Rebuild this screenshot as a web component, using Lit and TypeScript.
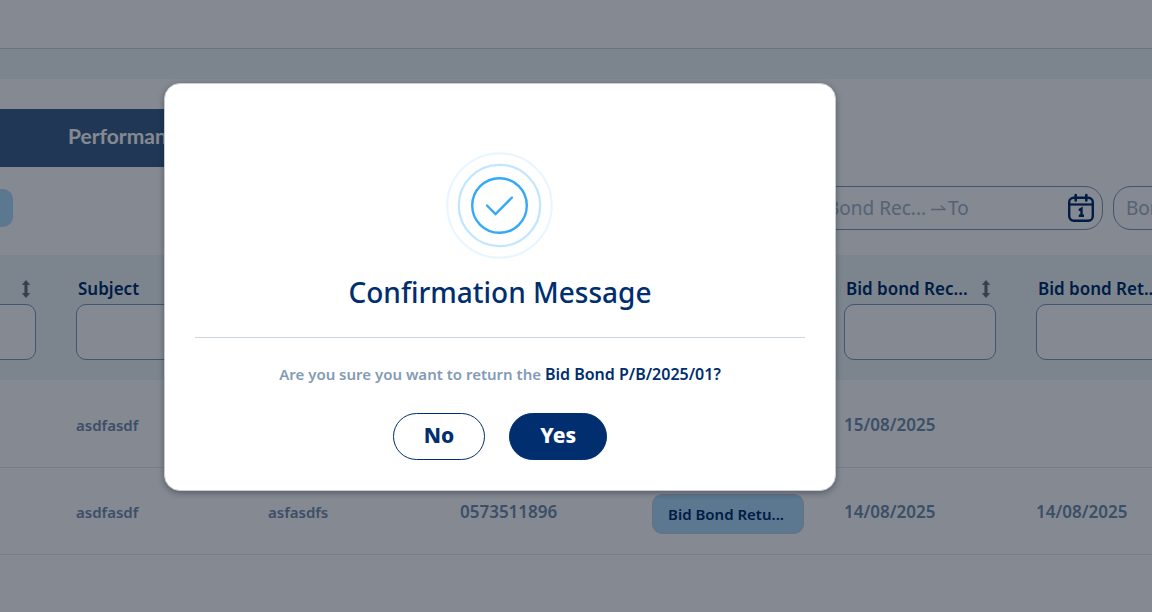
import { LitElement, html, css, svg } from "lit";
import { customElement, state } from "lit/decorators.js";

interface Column {
  key: string;
  label: string;
  numeric?: boolean;
}

const COLUMNS: Column[] = [
  { key: "number", label: "" },
  { key: "subject", label: "Subject" },
  { key: "entity", label: "Entity" },
  { key: "mobile", label: "Mobile", numeric: true },
  { key: "status", label: "Status" },
  { key: "received", label: "Bid bond Rec...", numeric: true },
  { key: "returned", label: "Bid bond Ret...", numeric: true },
];

const ROWS: Record<string, string>[] = [
  { subject: "asdfasdf", received: "15/08/2025" },
  {
    subject: "asdfasdf",
    entity: "asfasdfs",
    mobile: "0573511896",
    status: "Bid Bond Retu...",
    received: "14/08/2025",
    returned: "14/08/2025",
  },
];

const sortIcon = svg`<svg width="10" height="18" viewBox="0 0 10 18" aria-hidden="true">
  <path d="M5 .5 8.500 4.500H6.100V13.500H8.500L5 17.500 1.500 13.500H3.900V4.500H1.500Z" fill="#67717f" stroke="#67717f" stroke-width=".8" stroke-linejoin="round"/>
</svg>`;

const calendarIcon = svg`<svg width="28" height="30" viewBox="0 0 28 30" fill="none" stroke="#002e6e" aria-hidden="true">
  <rect x="2.200" y="4.700" width="23.600" height="23" rx="4.500" stroke-width="2.400"/>
  <path d="M2.200 11.500H25.800" stroke-width="2.200"/>
  <path d="M8.700 2V7.500M19.300 2V7.500" stroke-width="2.600" stroke-linecap="round"/>
  <path d="M11.800 17.200 14.500 15.600V22.800M11.800 22.800H17" stroke-width="2.400"/>
</svg>`;

const arrowIcon = svg`<svg width="15" height="8" viewBox="0 0 15 8" fill="none" stroke="#a9b4c1" aria-hidden="true">
  <path d="M0 5.500H14L9.800 1.600" stroke-width="1.300"/>
</svg>`;

@customElement("confirm-dialog")
export class ConfirmDialog extends LitElement {
  static styles = css`
    :host {
      display: block;
      width: 100%;
      max-width: 672px;
    }
    .dialog {
      box-sizing: border-box;
      padding: 68px 30px 30px;
      border: 1px solid #c9ccd1;
      border-radius: 16px;
      background: #fff;
      box-shadow: 0 2px 6px rgba(0, 9, 26, 0.35);
      text-align: center;
      color: #002e6e;
    }
    .mark {
      display: block;
      margin: 0 auto;
    }
    .title {
      margin: 12px 0 0;
      padding-bottom: 25px;
      border-bottom: 1px solid #ccd6dc;
      font-size: 28px;
      line-height: 40px;
      font-weight: 500;
    }
    .text {
      margin: 24px 0 0;
      font-size: 15px;
      line-height: 24px;
      font-weight: 600;
      color: #839bb5;
    }
    .subject {
      font-size: 16px;
      color: #002e6e;
    }
    .actions {
      display: flex;
      justify-content: center;
      gap: 24px;
      margin-top: 27px;
    }
    .button {
      box-sizing: border-box;
      height: 47px;
      padding: 0 30px 4px;
      border: 1px solid #002e6e;
      border-radius: 24px;
      background: #fff;
      color: #002e6e;
      font: 800 21px/24px "Noto Sans", sans-serif;
    }
    .primary {
      background: #002e6e;
      color: #fff;
    }
  `;

  render() {
    return html`
      <section class="dialog" role="dialog" aria-modal="true" aria-labelledby="title">
        <svg class="mark" width="108" height="108" viewBox="0 0 108 108" fill="none" aria-hidden="true">
          <circle cx="53.500" cy="53.500" r="52.200" stroke="#e9f6ff" stroke-width="2.200" />
          <circle cx="53.500" cy="53.500" r="40.700" stroke="#c2e6ff" stroke-width="2.300" />
          <circle cx="53.500" cy="53.500" r="27.300" stroke="#33a9f7" stroke-width="2.400" />
          <path d="M41 53.500 49.500 62 66 45.500" stroke="#33a9f7" stroke-width="2.300" stroke-linecap="round" />
        </svg>
        <h2 class="title" id="title">Confirmation Message</h2>
        <p class="text">
          Are you sure you want to return the <span class="subject">Bid Bond P/B/2025/01?</span>
        </p>
        <div class="actions">
          <button class="button" type="button" @click=${this.close}>No</button>
          <button class="button primary" type="button" @click=${this.close}>Yes</button>
        </div>
      </section>
    `;
  }

  private close() {
    this.dispatchEvent(new CustomEvent("close", { bubbles: true, composed: true }));
  }
}

@customElement("bond-table")
export class BondTable extends LitElement {
  static styles = css`
    :host {
      display: block;
      overflow: hidden;
    }
    .table {
      width: calc(100% + 328px);
      min-width: 1344px;
      margin-left: -136px;
      border-collapse: collapse;
      table-layout: fixed;
    }
    .col {
      width: 192px;
    }
    .head {
      box-sizing: border-box;
      height: 125px;
      padding: 22px 20px 20px;
      background: #eef8f8;
      text-align: left;
      vertical-align: top;
    }
    .sort {
      display: flex;
      align-items: center;
      justify-content: space-between;
      width: 100%;
      height: 24px;
      padding: 0 5px 0 2px;
      border: 0;
      background: none;
      color: #002e6e;
      font: 600 17px/24px "Noto Sans", sans-serif;
      white-space: nowrap;
    }
    .filter {
      box-sizing: border-box;
      display: block;
      width: 100%;
      height: 56px;
      margin-top: 3px;
      padding: 0 12px;
      border: 1px solid #7c9bc0;
      border-radius: 10px;
      background: #fff;
      font: 16px "Noto Sans", sans-serif;
    }
    .cell {
      box-sizing: border-box;
      height: 87px;
      padding: 3px 20px 0;
      border-bottom: 1px solid #e4e8f0;
      color: #7390b1;
      font-size: 15px;
      line-height: 22px;
      font-weight: 600;
      white-space: nowrap;
    }
    .numeric {
      font-size: 17px;
    }
    .badge {
      padding-top: 6px;
    }
    .status {
      box-sizing: border-box;
      display: block;
      padding: 8px 15px;
      border: 1px solid #c3d3de;
      border-radius: 10px;
      background: #afdffd;
      color: #002e6e;
    }
  `;

  private cellClass(c: Column) {
    if (c.key === "status") return "cell badge";
    return c.numeric ? "cell numeric" : "cell";
  }

  render() {
    return html`
      <table class="table">
        <colgroup>
          ${COLUMNS.map((_, i) => (i < COLUMNS.length - 1 ? html`<col class="col" />` : html`<col />`))}
        </colgroup>
        <thead>
          <tr>
            ${COLUMNS.map(
              (c) => html`<th class="head" scope="col">
                <button class="sort" type="button" aria-label="Sort ${c.label}"><span>${c.label}</span>${sortIcon}</button>
                <input class="filter" type="text" aria-label="Filter ${c.label}" />
              </th>`
            )}
          </tr>
        </thead>
        <tbody>
          ${ROWS.map(
            (row) => html`<tr>
              ${COLUMNS.map(
                (c) => html`<td class=${this.cellClass(c)}>
                  ${c.key === "status" && row.status
                    ? html`<span class="status">${row.status}</span>`
                    : row[c.key] ?? ""}
                </td>`
              )}
            </tr>`
          )}
        </tbody>
      </table>
    `;
  }
}

@customElement("app-root")
export class AppRoot extends LitElement {
  static styles = css`
    :host {
      display: block;
      position: relative;
      min-height: 100vh;
      overflow: hidden;
      background: #fff;
      font-family: "Noto Sans", sans-serif;
    }
    .topbar {
      height: 48px;
      border-bottom: 1px solid #c8d3e4;
    }
    .band {
      height: 30px;
      background: #eef8f8;
    }
    .tabs {
      display: flex;
      width: 40%;
      margin-top: 30px;
      background: #3e648d;
    }
    .tab {
      padding: 14px 68px 19px;
      border: 0;
      background: none;
      color: #fff;
      font: 700 21px/25px Lato, sans-serif;
    }
    .filters {
      display: flex;
      align-items: center;
      justify-content: space-between;
      padding: 19px 0 25px;
    }
    .chip {
      width: 13px;
      height: 38px;
      padding: 0;
      border: 0;
      border-radius: 0 10px 10px 0;
      background: #afdffd;
    }
    .fields {
      display: flex;
      gap: 10px;
      margin-right: -262px;
    }
    .field {
      box-sizing: border-box;
      display: flex;
      align-items: center;
      width: 301px;
      height: 44px;
      padding: 0 7px 0 12px;
      border: 1px solid #7c9bc0;
      border-radius: 18px;
      background: #fff;
    }
    .input {
      min-width: 0;
      flex: 1;
      padding: 0;
      border: 0;
      outline: 0;
      background: none;
      font: 19px/24px "Noto Sans", sans-serif;
    }
    .from {
      flex: none;
      width: 104px;
    }
    .field.range {
      padding-left: 24px;
    }
    .to {
      margin-left: 2px;
    }
    .input::placeholder {
      color: #a2b6cb;
      opacity: 1;
    }
    .calendar {
      display: flex;
      padding: 0;
      border: 0;
      background: none;
    }
    .overlay {
      position: absolute;
      inset: 0;
      display: flex;
      align-items: flex-start;
      justify-content: center;
      padding: 83px 152px 0 0;
      background: rgba(0, 9, 26, 0.48);
    }
  `;

  @state() private open = true;

  render() {
    return html`
      <header class="topbar"></header>
      <div class="band"></div>
      <nav class="tabs"><button class="tab" type="button">Performance Bond</button></nav>
      <div class="filters">
        <button class="chip" type="button" aria-label="Active filter"></button>
        <div class="fields">
          <div class="field range">
            <input class="input from" type="text" placeholder="Bond Rec..." aria-label="Received from" />
            ${arrowIcon}
            <input class="input to" type="text" placeholder="To" aria-label="Received to" />
            <button class="calendar" type="button" aria-label="Pick dates">${calendarIcon}</button>
          </div>
          <div class="field">
            <input class="input" type="text" placeholder="Bond Ret..." aria-label="Returned from" />
          </div>
        </div>
      </div>
      <bond-table></bond-table>
      ${this.open
        ? html`<div class="overlay" @close=${() => (this.open = false)}><confirm-dialog></confirm-dialog></div>`
        : ""}
    `;
  }
}
